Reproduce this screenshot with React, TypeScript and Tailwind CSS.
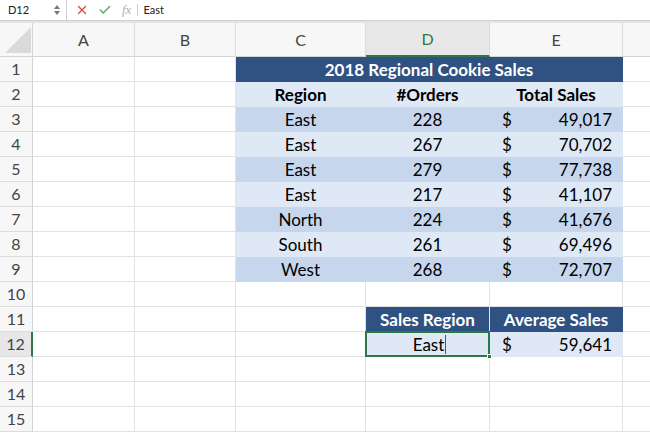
import { X, Check } from "lucide-react";

const cols = [
  { key: "A", w: "w-[102px]" },
  { key: "B", w: "w-[101px]" },
  { key: "C", w: "w-[130px]" },
  { key: "D", w: "w-[124px]" },
  { key: "E", w: "w-[133px]" },
];

const data = [
  ["East", "228", "49,017"],
  ["East", "267", "70,702"],
  ["East", "279", "77,738"],
  ["East", "217", "41,107"],
  ["North", "224", "41,676"],
  ["South", "261", "69,496"],
  ["West", "268", "72,707"],
];

const dark = "bg-[#2f5282] border-[#2f5282]";
const light = "bg-[#dfe8f5] border-[#dfe8f5]";
const mid = "bg-[#c6d6ec] border-[#c6d6ec]";

function RowHead({ n, active }: { n: number; active?: boolean }) {
  return (
    <div
      className={
        "w-[33px] shrink-0 flex items-center justify-center border-b border-[#dcdcdc] text-[16px] text-[#444] " +
        (active ? "bg-[#e7e7e7] border-r-2 border-r-[#2b7a45]" : "bg-[#f7f7f7] border-r border-r-[#d4d4d4]")
      }
    >
      {n}
    </div>
  );
}

function Empty({ w }: { w: string }) {
  return <div className={w + " shrink-0 border-r border-b border-[#e2e2e2]"} />;
}

function Money({ v, cls }: { v: string; cls: string }) {
  return (
    <div className={"w-[133px] shrink-0 flex items-center justify-between pl-[12px] pr-[10px] border-r border-b " + cls}>
      <span>$</span>
      <span>{v}</span>
    </div>
  );
}

export default function App() {
  const rows = Array.from({ length: 15 }, (_, i) => i + 1);
  return (
    <div className="w-[650px] h-[433px] overflow-hidden bg-white text-black" style={{ fontFamily: "Lato, 'Open Sans', sans-serif" }}>
      {/* Formula bar */}
      <div className="h-[21px] flex items-center text-[11px] text-[#222] border-b border-[#cfcfcf]">
        <div className="w-[67px] h-full flex items-center justify-between pl-[8px] pr-[6px] border-r border-[#d0d0d0]">
          <span>D12</span>
          <span className="flex flex-col items-center gap-[2px]">
            <span className="w-0 h-0 border-l-[3px] border-r-[3px] border-b-[4px] border-l-transparent border-r-transparent border-b-[#777]" />
            <span className="w-0 h-0 border-l-[3px] border-r-[3px] border-t-[4px] border-l-transparent border-r-transparent border-t-[#777]" />
          </span>
        </div>
        <X className="ml-[8px] text-[#d9493e]" size={14} strokeWidth={2.2} />
        <Check className="ml-[9px] text-[#5aa85a]" size={14} strokeWidth={2.4} />
        <span className="ml-[10px] text-[#b0b0b0] italic text-[13px]" style={{ fontFamily: "'Liberation Serif', serif" }}>
          fx
        </span>
        <span className="ml-[6px] w-px h-[12px] bg-[#cfcfcf]" />
        <span className="ml-[5px]">East</span>
      </div>
      <div className="h-[2px] bg-[#e4e4e4]" />

      {/* Column header */}
      <div className="flex h-[34px] bg-[#f7f7f7] text-[16px] text-[#444]">
        <div className="w-[33px] shrink-0 flex items-end justify-end pr-[1px] pb-[3px] border-r border-b border-[#d4d4d4]">
          <div className="w-[26px] h-[26px] bg-[#dadada] [clip-path:polygon(100%_0,100%_100%,0_100%)]" />
        </div>
        {cols.map((c) => (
          <div
            key={c.key}
            className={
              c.w +
              " shrink-0 flex items-center justify-center border-r border-r-[#dcdcdc] " +
              (c.key === "D" ? "bg-[#e8e8e8] text-[#2b7a45] border-b-2 border-b-[#2b7a45]" : "border-b border-b-[#d4d4d4]")
            }
          >
            {c.key}
          </div>
        ))}
        <div className="flex-1 border-b border-[#d4d4d4]" />
      </div>

      {/* Rows */}
      <div className="text-[17px] leading-none">
        {rows.map((r) => {
          let content: React.ReactNode;
          if (r === 1) {
            content = (
              <div className={"w-[387px] shrink-0 flex items-center justify-center font-bold text-white border-r border-b " + dark}>
                2018 Regional Cookie Sales
              </div>
            );
          } else if (r === 2) {
            content = (
              <>
                <div className={"w-[130px] shrink-0 flex items-center justify-center font-bold border-r border-b " + light}>Region</div>
                <div className={"w-[124px] shrink-0 flex items-center justify-center font-bold border-r border-b " + light}>#Orders</div>
                <div className={"w-[133px] shrink-0 flex items-center justify-center font-bold border-r border-b " + light}>Total Sales</div>
              </>
            );
          } else if (r >= 3 && r <= 9) {
            const d = data[r - 3];
            const cls = r % 2 === 1 ? mid : light;
            content = (
              <>
                <div className={"w-[130px] shrink-0 flex items-center justify-center border-r border-b " + cls}>{d[0]}</div>
                <div className={"w-[124px] shrink-0 flex items-center justify-center border-r border-b " + cls}>{d[1]}</div>
                <Money v={d[2]} cls={cls} />
              </>
            );
          } else if (r === 11) {
            content = (
              <>
                <Empty w="w-[130px]" />
                <div className={"w-[124px] shrink-0 flex items-center justify-center font-bold text-white border-b border-r border-r-[#dfe6ee] " + dark}>
                  Sales Region
                </div>
                <div className={"w-[133px] shrink-0 flex items-center justify-center font-bold text-white border-r border-b " + dark}>
                  Average Sales
                </div>
              </>
            );
          } else if (r === 12) {
            content = (
              <>
                <Empty w="w-[130px]" />
                <div className={"w-[124px] shrink-0 relative flex items-center justify-center border-r border-b " + light}>
                  <span className="pl-[4px]">East</span>
                  <span className="ml-[1px] w-px h-[19px] bg-[#555]" />
                  <div className="absolute -left-[1px] -top-[1px] -right-[1px] -bottom-[1px] border-2 border-[#2b7a45]" />
                  <div className="absolute -right-[3px] -bottom-[3px] w-[5px] h-[5px] bg-[#2b7a45] border border-white" />
                </div>
                <Money v="59,641" cls={light} />
              </>
            );
          } else {
            content = (
              <>
                <Empty w="w-[130px]" />
                <Empty w="w-[124px]" />
                <Empty w="w-[133px]" />
              </>
            );
          }
          return (
            <div key={r} className="flex h-[25px]">
              <RowHead n={r} active={r === 12} />
              <Empty w="w-[102px]" />
              <Empty w="w-[101px]" />
              {content}
              <div className="flex-1 border-b border-[#e2e2e2]" />
            </div>
          );
        })}
      </div>
    </div>
  );
}
